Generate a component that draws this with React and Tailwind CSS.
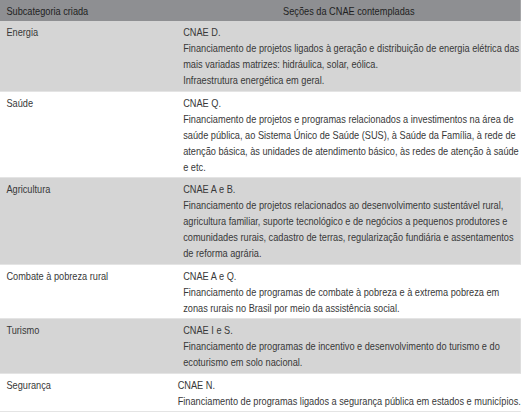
import React from 'react';

// table is laid out wide and squeezed horizontally to mimic the condensed typeface
const rows = [
  {
    name: 'Energia',
    shaded: true,
    lines: [
      'CNAE D.',
      'Financiamento de projetos ligados à geração e distribuição de energia elétrica das',
      'mais variadas matrizes: hidráulica, solar, eólica.',
      'Infraestrutura energética em geral.',
    ],
  },
  {
    name: 'Saúde',
    lines: [
      'CNAE Q.',
      'Financiamento de projetos e programas relacionados a investimentos na área de',
      'saúde pública, ao Sistema Único de Saúde (SUS), à Saúde da Família, à rede de',
      'atenção básica, às unidades de atendimento básico, às redes de atenção à saúde',
      'e etc.',
    ],
  },
  {
    name: 'Agricultura',
    shaded: true,
    lines: [
      'CNAE A e B.',
      'Financiamento de projetos relacionados ao desenvolvimento sustentável rural,',
      'agricultura familiar, suporte tecnológico e de negócios a pequenos produtores e',
      'comunidades rurais, cadastro de terras, regularização fundiária e assentamentos',
      'de reforma agrária.',
    ],
  },
  {
    name: 'Combate à pobreza rural',
    lines: [
      'CNAE A e Q.',
      'Financiamento de programas de combate à pobreza e à extrema pobreza em',
      'zonas rurais no Brasil por meio da assistência social.',
    ],
  },
  {
    name: 'Turismo',
    shaded: true,
    lines: [
      'CNAE I e S.',
      'Financiamento de programas de incentivo e desenvolvimento do turismo e do',
      'ecoturismo em solo nacional.',
    ],
  },
  {
    name: 'Segurança',
    lines: [
      'CNAE N.',
      'Financiamento de programas ligados a segurança pública em estados e municípios.',
    ],
  },
];

export default function App() {
  return (
    <div className="w-[528px] h-[412px] bg-white overflow-hidden">
      <div
        className="w-[651px] origin-left scale-x-[0.8] text-[11.5px] leading-[16px] text-[#383838] whitespace-nowrap"
        style={{ fontFamily: '"Liberation Sans", Arial, sans-serif' }}
      >
        {/* header */}
        <div className="flex h-[21px] items-center bg-[#8e8f92] text-[#1f1f1f]">
          <div className="w-[221px] pl-[8px]">Subcategoria criada</div>
          <div className="flex-1 text-center">Seções da CNAE contempladas</div>
        </div>

        {rows.map((row) => (
          <div
            key={row.name}
            className={`flex pt-[3px] pb-[2.5px] border-b border-[#e4e4e4] ${row.shaded ? 'bg-[#d5d5d5]' : 'bg-white'}`}
          >
            <div className="w-[221px] pl-[8px]">{row.name}</div>
            <div className="flex-1 pl-[8px]">
              {row.lines.map((l, i) => (
                <p key={i}>{l}</p>
              ))}
            </div>
          </div>
        ))}
        <div className="h-[2px] bg-[#d5d5d5]" />
      </div>
    </div>
  );
}
